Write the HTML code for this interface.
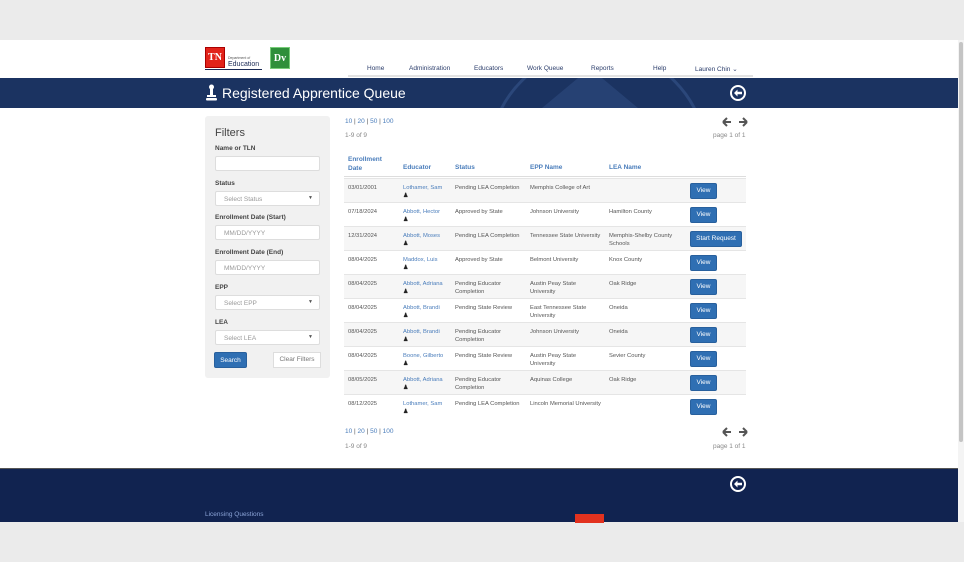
<!DOCTYPE html>
<html><head><style>
*{box-sizing:border-box;margin:0;padding:0}
body{width:964px;height:562px;background:#ebebeb;font-family:"Liberation Sans",sans-serif;position:relative;overflow:hidden}
.page{position:absolute;left:0;top:40px;width:958px;height:482px;background:#fff}
.sb{position:absolute;left:958px;top:40px;width:6px;height:482px;background:#f4f4f4}
.sb div{position:absolute;left:1px;top:2px;width:4px;height:400px;background:#c4c4c4;border-radius:2px}
.abs{position:absolute}
.nav a{position:absolute;top:25px;font-size:6.5px;color:#2b3d6b}
.navline{position:absolute;left:348px;top:35px;width:405px;height:2px;background:#e2e2e2}
.banner{position:absolute;left:0;top:38px;width:958px;height:30px;background:#1b3361;overflow:hidden}
.banner h1{position:absolute;left:222px;top:7px;color:#fff;font-size:14px;font-weight:normal}
.filters{position:absolute;left:205px;top:76px;width:125px;height:262px;background:#f1f1f1;border-radius:3px}
.filters .t{position:absolute;left:10px;top:11px;font-size:11px;color:#444}
.lbl{position:absolute;left:10px;font-size:6.5px;font-weight:bold;color:#444}
.inp{position:absolute;left:10px;width:105px;height:15px;background:#fff;border:1px solid #ddd;border-radius:2px;font-size:6.5px;color:#999;padding:4px 0 0 8px}
.inp i{position:absolute;right:6px;top:3px;font-style:normal;font-size:5px;color:#555}
.btn{position:absolute;background:#2f6fb3;color:#fff;font-size:6.5px;border-radius:2px;text-align:center;line-height:16px;border:1px solid #28609d}
.s{font-size:6.5px;color:#555;position:absolute}
.lk{color:#4a7dbb}
.hd{position:absolute;font-size:6.5px;font-weight:bold;color:#4a7dbb}
.row{position:absolute;left:344px;width:402px;height:24px;border-top:1px solid #e5e5e5}
.row.alt{background:#f6f6f6}
.row .c{position:absolute;top:5px;font-size:5.8px;color:#555;line-height:8px}
.row .c.lk{color:#4a7dbb}
.row .p{color:#222;font-size:6px}
</style></head><body>
<div class="page">
 <div class="abs" style="left:205px;top:7px;width:20px;height:21px;background:#e2231a;color:#fff;font:bold 10px 'Liberation Serif',serif;text-align:center;line-height:19px;border:1px solid #a00">TN</div>
 <div class="abs" style="left:228px;top:16px;font-size:3.5px;color:#555">Department of</div>
 <div class="abs" style="left:228px;top:21px;font-size:7px;color:#1b2a55">Education</div>
 <div class="abs" style="left:205px;top:29px;width:57px;height:1px;background:#1b2a55"></div>
 <div class="abs" style="left:270px;top:7px;width:20px;height:22px;background:#2f8f3a;color:#fff;font:bold 10px 'Liberation Serif',serif;text-align:center;line-height:22px;border:1px solid #7c7">Dv</div>
 <div class="nav"><a style="left:367px">Home</a><a style="left:409px">Administration</a><a style="left:474px">Educators</a><a style="left:527px">Work Queue</a><a style="left:591px">Reports</a><a style="left:653px">Help</a><a style="left:695px">Lauren Chin ⌄</a></div>
 <div class="navline"></div>
 <div class="banner">
  <div class="abs" style="left:488px;top:-30px;width:220px;height:220px;border-radius:50%;border:3px solid #2b477a"></div>
  <div class="abs" style="left:530px;top:-10px;width:0;height:0;border-left:60px solid transparent;border-right:60px solid transparent;border-bottom:50px solid #2b477a;opacity:.7"></div>
  <svg class="abs" style="left:206px;top:6px" width="11" height="17" viewBox="0 0 11 17"><circle cx="5.5" cy="3" r="2.5" fill="#fff"/><rect x="4" y="5" width="3" height="6" fill="#fff"/><rect x="1" y="11" width="9" height="2" fill="#fff"/><rect x="0" y="14" width="11" height="2.5" rx="1" fill="#fff"/></svg>
  <h1>Registered Apprentice Queue</h1>
  <svg class="abs" style="left:730px;top:7px" width="16" height="16" viewBox="0 0 16 16"><circle cx="8" cy="8" r="7" fill="none" stroke="#fff" stroke-width="2"/><path d="M4 8l3.5-3.5v2.2H12v2.6H7.5v2.2z" fill="#fff"/></svg>
 </div>
 <div class="filters">
  <div class="t">Filters</div>
  <div class="lbl" style="top:29px">Name or TLN</div><div class="inp" style="top:40px"></div>
  <div class="lbl" style="top:64px">Status</div><div class="inp" style="top:75px">Select Status<i>▼</i></div>
  <div class="lbl" style="top:98px">Enrollment Date (Start)</div><div class="inp" style="top:109px">MM/DD/YYYY</div>
  <div class="lbl" style="top:133px">Enrollment Date (End)</div><div class="inp" style="top:144px">MM/DD/YYYY</div>
  <div class="lbl" style="top:168px">EPP</div><div class="inp" style="top:179px">Select EPP<i>▼</i></div>
  <div class="lbl" style="top:203px">LEA</div><div class="inp" style="top:214px">Select LEA<i>▼</i></div>
  <div class="btn" style="left:9px;top:236px;width:33px;height:16px">Search</div>
  <div class="abs" style="left:68px;top:236px;width:48px;height:16px;background:#fff;border:1px solid #ddd;font-size:6.5px;color:#777;text-align:center;line-height:14px">Clear Filters</div>
 </div>
 <div class="s" style="left:345px;top:78px"><span class="lk">10</span> | <span class="lk">20</span> | <span class="lk">50</span> | <span class="lk">100</span></div>
 <div class="s" style="left:345px;top:92px;color:#888">1-9 of 9</div>
 <svg class="abs" style="left:722px;top:77px" width="26" height="10" viewBox="0 0 26 10"><path d="M1 5l4-4M1 5l4 4M1 5h8M25 5l-4-4M25 5l-4 4M25 5h-8" stroke="#555" stroke-width="2" fill="none"/></svg>
 <div class="s" style="left:713px;top:92px;color:#888">page 1 of 1</div>
 <div class="hd" style="left:348px;top:115px;line-height:9px">Enrollment<br>Date</div>
 <div class="hd" style="left:403px;top:124px">Educator</div>
 <div class="hd" style="left:455px;top:124px">Status</div>
 <div class="hd" style="left:530px;top:124px">EPP Name</div>
 <div class="hd" style="left:609px;top:124px">LEA Name</div>
 <div class="abs" style="left:344px;top:136px;width:402px;height:1px;background:#ddd"></div>
 <div id="rows"></div>
 <div class="s" style="left:345px;top:388px"><span class="lk">10</span> | <span class="lk">20</span> | <span class="lk">50</span> | <span class="lk">100</span></div>
 <div class="s" style="left:345px;top:403px;color:#888">1-9 of 9</div>
 <svg class="abs" style="left:722px;top:387px" width="26" height="10" viewBox="0 0 26 10"><path d="M1 5l4-4M1 5l4 4M1 5h8M25 5l-4-4M25 5l-4 4M25 5h-8" stroke="#555" stroke-width="2" fill="none"/></svg>
 <div class="s" style="left:713px;top:403px;color:#888">page 1 of 1</div>
</div>
<div class="abs" style="left:0;top:468px;width:958px;height:54px;background:#112350;border-top:1px solid #555">
 <svg class="abs" style="left:730px;top:7px" width="16" height="16" viewBox="0 0 16 16"><circle cx="8" cy="8" r="7" fill="none" stroke="#fff" stroke-width="2"/><path d="M4 8l3.5-3.5v2.2H12v2.6H7.5v2.2z" fill="#fff"/></svg>
 <div class="abs" style="left:205px;top:42px;font-size:6.5px;color:#8aa3d6">Licensing Questions</div>
 <div class="abs" style="left:575px;top:45px;width:29px;height:9px;background:#e2321f"></div>
</div>
<div class="sb"><div></div></div>
<script>
var d=[["03/01/2001","Lothamer, Sam","Pending LEA Completion","Memphis College of Art","","View"],
["07/18/2024","Abbott, Hector","Approved by State","Johnson University","Hamilton County","View"],
["12/31/2024","Abbott, Moses","Pending LEA Completion","Tennessee State University","Memphis-Shelby County<br>Schools","Start Request"],
["08/04/2025","Maddox, Luis","Approved by State","Belmont University","Knox County","View"],
["08/04/2025","Abbott, Adriana","Pending Educator<br>Completion","Austin Peay State<br>University","Oak Ridge","View"],
["08/04/2025","Abbott, Brandi","Pending State Review","East Tennessee State<br>University","Oneida","View"],
["08/04/2025","Abbott, Brandi","Pending Educator<br>Completion","Johnson University","Oneida","View"],
["08/04/2025","Boone, Gilberto","Pending State Review","Austin Peay State<br>University","Sevier County","View"],
["08/05/2025","Abbott, Adriana","Pending Educator<br>Completion","Aquinas College","Oak Ridge","View"],
["08/12/2025","Lothamer, Sam","Pending LEA Completion","Lincoln Memorial University","","View"]];
var h="";d.forEach(function(r,i){var w=r[5]=="View"?27:52;
h+='<div class="row'+(i%2==0?' alt':'')+'" style="top:'+(138+i*24)+'px"><div class="c" style="left:4px">'+r[0]+'</div><div class="c lk" style="left:59px">'+r[1]+'<br><b class="p">♟</b></div><div class="c" style="left:111px">'+r[2]+'</div><div class="c" style="left:186px">'+r[3]+'</div><div class="c" style="left:265px">'+r[4]+'</div><div class="btn" style="left:346px;top:4px;width:'+w+'px;height:16px;line-height:14px">'+r[5]+'</div></div>';});
document.getElementById("rows").innerHTML=h;
</script>
</body></html>
